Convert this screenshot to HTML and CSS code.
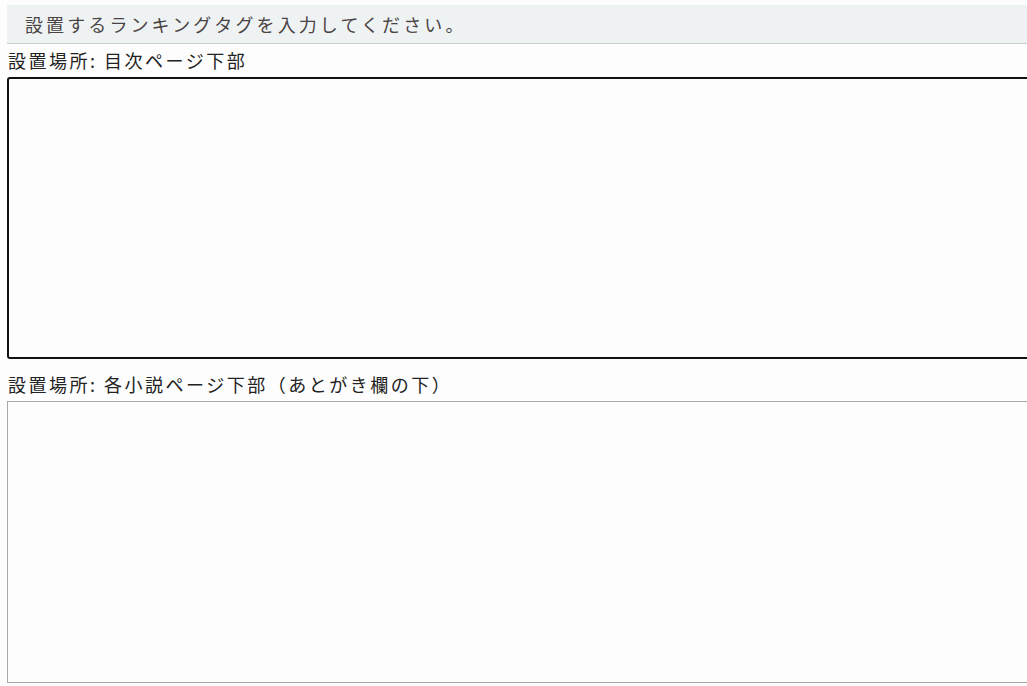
FILE: index.html
```html
<!DOCTYPE html>
<html lang="ja">
<head>
<meta charset="utf-8">
<title>ランキングタグ</title>
<link rel="stylesheet" href="styles.css">
</head>
<body>
<div class="page">
  <h2 class="heading">設置するランキングタグを入力してください。</h2>
  <div class="field">
    <label class="label" for="tag1">設置場所: 目次ページ下部</label>
    <textarea id="tag1" class="box box-active"></textarea>
  </div>
  <div class="field">
    <label class="label" for="tag2">設置場所: 各小説ページ下部（あとがき欄の下）</label>
    <textarea id="tag2" class="box"></textarea>
  </div>
</div>
</body>
</html>
```
FILE: styles.css
```css
html, body {
  margin: 0;
  padding: 0;
  background: #fdfdfd;
  overflow: hidden;
}
.page {
  padding: 5px 0 0 7px;
  width: 1100px;
  font-family: "Noto Sans CJK JP", "DejaVu Sans", sans-serif;
}
.heading {
  margin: 0;
  height: 38px;
  line-height: 38px;
  padding-left: 18px;
  background: #eff2f3;
  border-bottom: 1px solid #cccccc;
  font-size: 18px;
  font-weight: normal;
  letter-spacing: 3.1px;
  color: #4a4444;
}
.field {
  display: flex;
  flex-direction: column;
}
.label {
  display: block;
  height: 33px;
  line-height: 33px;
  padding-left: 1px;
  font-size: 18px;
  letter-spacing: 2.5px;
  color: #222222;
}
.box {
  display: block;
  box-sizing: border-box;
  width: 1100px;
  height: 282px;
  margin: 0 0 9px 0;
  background: #fdfdfd;
  border: 1px solid #a9a9a9;
  resize: none;
  padding: 2px;
}
.box-active {
  border: 2px solid #111111;
  border-radius: 3px;
}
```
